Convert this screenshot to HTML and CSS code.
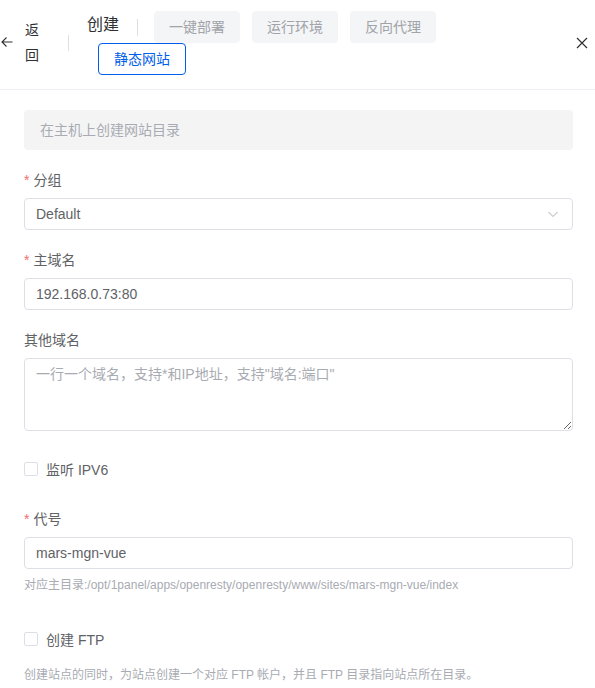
FILE: index.html
```html
<!DOCTYPE html>
<html lang="zh-CN">
<head>
<meta charset="utf-8">
<title>创建网站</title>
<link rel="stylesheet" href="styles.css">
</head>
<body>
<div class="drawer">
  <header class="header">
    <div class="back">
      <svg class="back-arrow" width="12" height="12" viewBox="0 0 12 12"><path d="M11.5 6H1M5.5 1.5L1 6l4.5 4.5" fill="none" stroke="#303133" stroke-width="1.1"/></svg>
      <span class="back-text">返回</span>
    </div>
    <span class="vdivider"></span>
    <div class="title-wrap">
      <span class="title">创建</span>
      <span class="title-divider"></span>
      <button class="tab">一键部署</button>
      <button class="tab">运行环境</button>
      <button class="tab">反向代理</button>
      <button class="tab active">静态网站</button>
    </div>
    <svg class="close" width="12" height="12" viewBox="0 0 12 12"><path d="M1 1l10 10M11 1L1 11" stroke="#303133" stroke-width="1.2" fill="none"/></svg>
  </header>

  <form class="form">
    <div class="alert">在主机上创建网站目录</div>

    <div class="item">
      <label class="label"><span class="req">*</span>分组</label>
      <div class="select">
        <span>Default</span>
        <svg width="12" height="12" viewBox="0 0 12 12"><path d="M1.5 4l4.5 4.5L10.5 4" fill="none" stroke="#a8abb2" stroke-width="1"/></svg>
      </div>
    </div>

    <div class="item">
      <label class="label"><span class="req">*</span>主域名</label>
      <input class="input" type="text" value="192.168.0.73:80">
    </div>

    <div class="item">
      <label class="label">其他域名</label>
      <textarea class="textarea" rows="3" placeholder="一行一个域名，支持*和IP地址，支持&quot;域名:端口&quot;"></textarea>
    </div>

    <div class="item item-check">
      <label class="check"><span class="box"></span>监听 IPV6</label>
    </div>

    <div class="item">
      <label class="label"><span class="req">*</span>代号</label>
      <input class="input" type="text" value="mars-mgn-vue">
      <div class="help">对应主目录:/opt/1panel/apps/openresty/openresty/www/sites/mars-mgn-vue/index</div>
    </div>

    <div class="item item-check">
      <label class="check"><span class="box"></span>创建 FTP</label>
      <div class="help">创建站点的同时，为站点创建一个对应 FTP 帐户，并且 FTP 目录指向站点所在目录。</div>
    </div>
  </form>
</div>
</body>
</html>
```

FILE: styles.css
```css
* { box-sizing: border-box; }
html, body {
  margin: 0;
  padding: 0;
  background: #fff;
}
body {
  font-family: "Liberation Sans", "Noto Sans CJK SC", sans-serif;
  font-size: 14px;
  color: #606266;
  overflow: hidden;
}
.header {
  display: flex;
  align-items: flex-start;
  height: 90px;
  border-bottom: 1px solid #ebeef5;
}
.back {
  display: flex;
  align-items: flex-start;
}
.back-arrow {
  margin: 36px 0 0 1px;
}
.back-text {
  width: 14px;
  margin: 18px 0 0 12px;
  line-height: 25px;
  color: #303133;
}
.vdivider {
  width: 1px;
  height: 16px;
  background: #dcdfe6;
  margin: 35px 0 0 29px;
}
.title-wrap {
  display: flex;
  flex-wrap: wrap;
  align-items: center;
  width: 360px;
  margin: 11px 0 0 18px;
}
.title {
  font-size: 16px;
  line-height: 28px;
  color: #303133;
  margin-top: -4px;
}
.title-divider {
  width: 1px;
  height: 17px;
  background: #dcdfe6;
  margin: 0 4px 0 18px;
}
.tab {
  height: 32px;
  padding: 0 14px;
  margin-left: 12px;
  border: 1px solid #f4f5f7;
  border-radius: 4px;
  background: #f4f5f7;
  color: #a0a3a8;
  font-family: inherit;
  font-size: 14px;
  line-height: 30px;
}
.tab.active {
  padding: 0 15px;
  margin-left: 11px;
  background: #fff;
  border-color: #005eeb;
  color: #005eeb;
}
.close {
  margin: 37px 7px 0 auto;
}
.form {
  padding: 20px 22px 0 24px;
}
.alert {
  height: 40px;
  line-height: 40px;
  padding: 0 16px;
  border-radius: 4px;
  background: #f4f4f5;
  color: #a8abb2;
  margin-bottom: 18px;
}
.item {
  padding-top: 1px;
  margin-bottom: 18px;
}
.item-check {
  padding-top: 0;
}
.label {
  display: block;
  line-height: 22px;
  margin: 0 0 7px;
  color: #606266;
}
.req {
  color: #f56c6c;
  margin-right: 4px;
}
.select, .input {
  display: flex;
  align-items: center;
  justify-content: space-between;
  width: 100%;
  height: 32px;
  padding: 0 13px 0 11px;
  border: 1px solid #dcdfe6;
  border-radius: 4px;
  color: #606266;
  font-family: inherit;
  font-size: 14px;
  background: #fff;
}
.input {
  display: block;
  padding-right: 11px;
  outline: none;
}
.textarea {
  display: block;
  width: 100%;
  height: 73px;
  padding: 5px 11px;
  border: 1px solid #dcdfe6;
  border-radius: 4px;
  font-family: inherit;
  font-size: 14px;
  line-height: 21px;
  color: #606266;
}
.textarea::placeholder {
  color: #a8abb2;
}
.check {
  display: flex;
  align-items: center;
  height: 40px;
  color: #606266;
}
.box {
  width: 14px;
  height: 14px;
  border: 1px solid #dcdfe6;
  border-radius: 2px;
  margin-right: 8px;
}
.help {
  font-size: 12px;
  line-height: 32px;
  color: #a8abb2;
}
```
